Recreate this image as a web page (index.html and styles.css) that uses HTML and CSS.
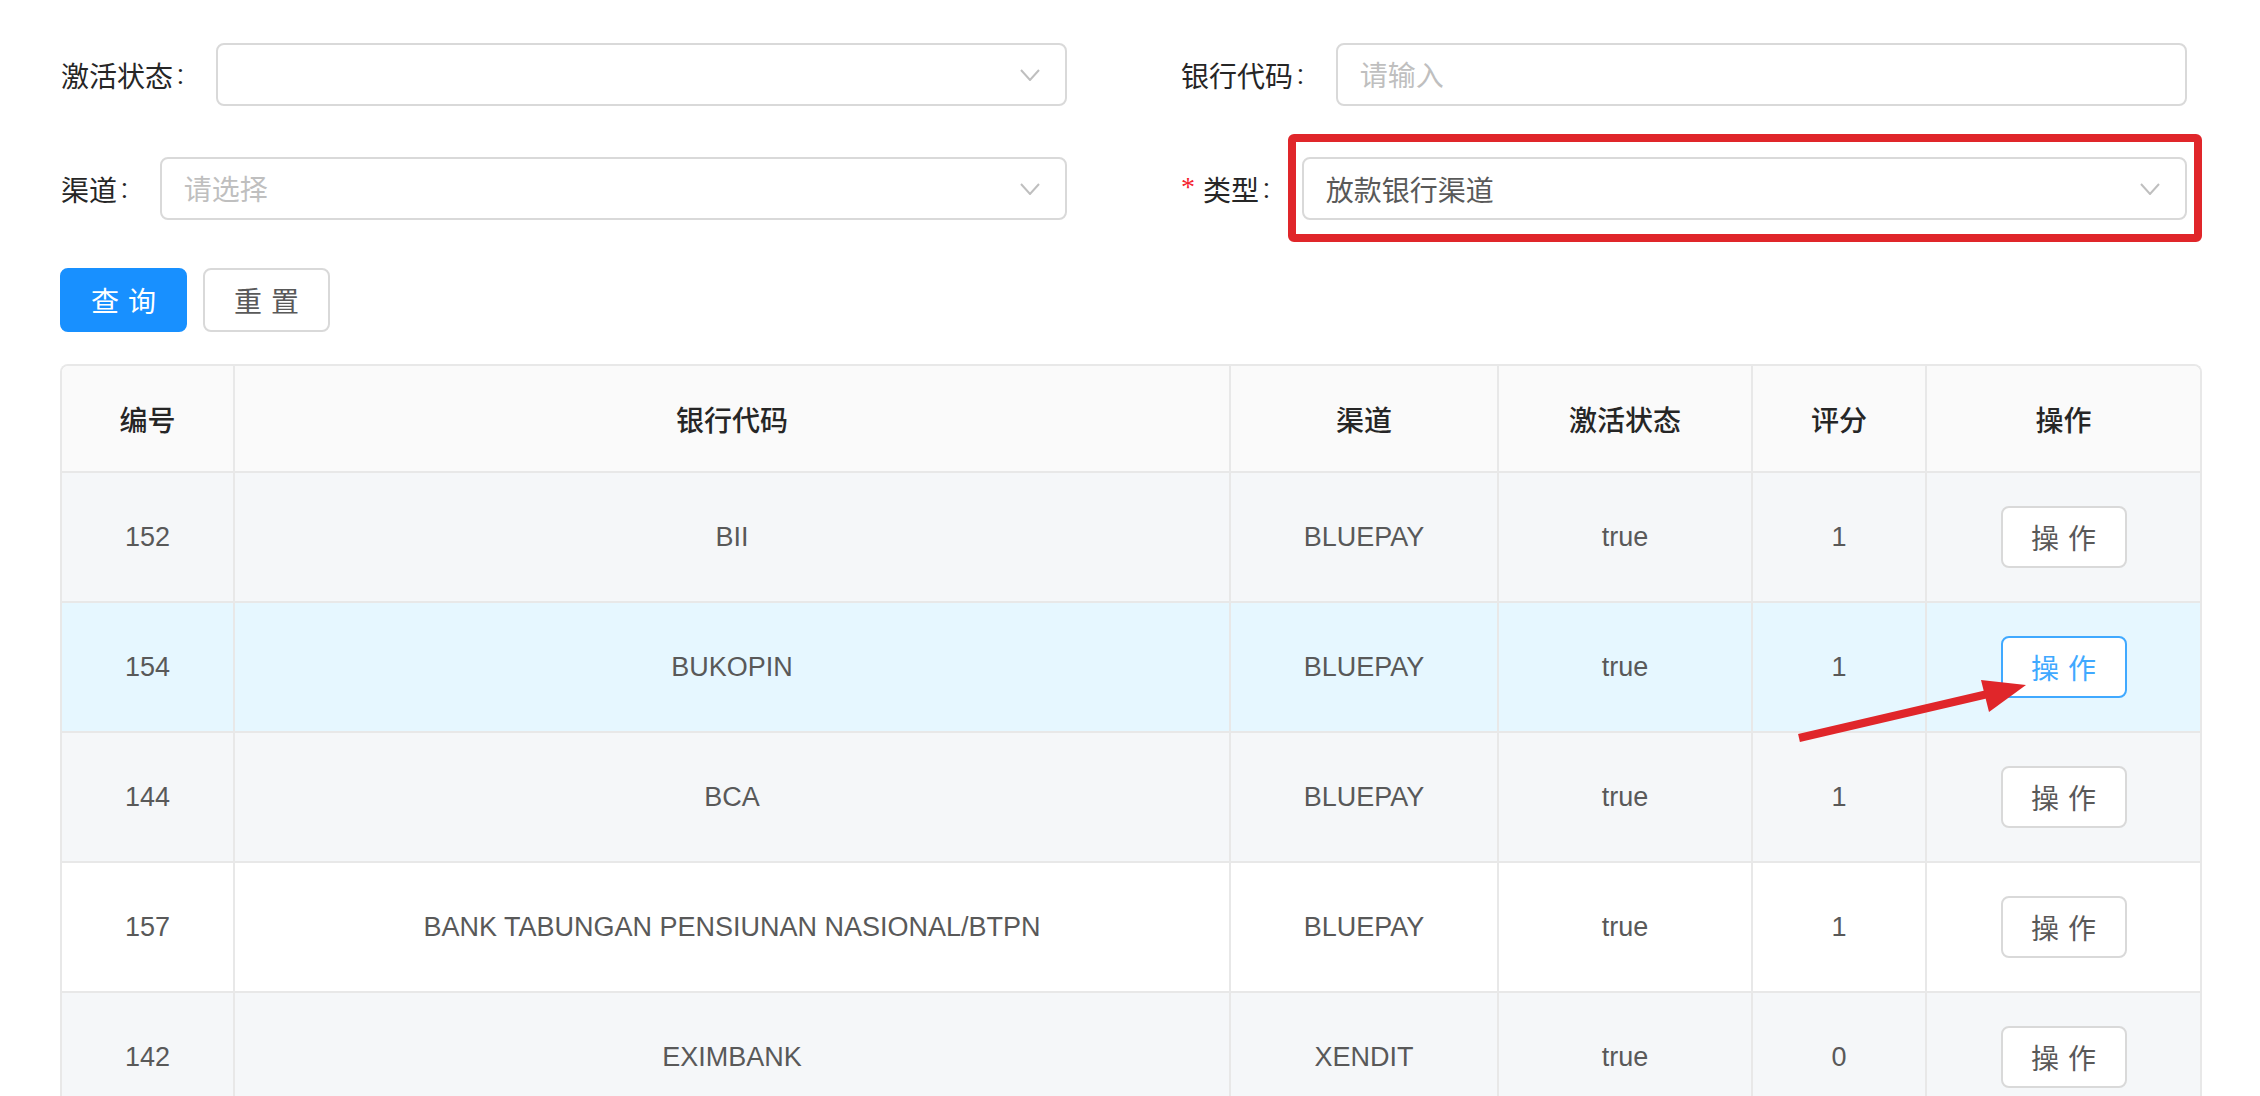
FILE: index.html
```html
<!DOCTYPE html>
<html lang="zh-CN">
<head>
<meta charset="utf-8">
<title>银行渠道</title>
<link rel="stylesheet" href="styles.css">
</head>
<body>
<div class="page">
  <form class="search-form">
    <div class="form-item">
      <label class="label">激活状态<span class="colon">:</span></label>
      <div class="control select">
        <span class="value"></span>
        <svg class="chevron" viewBox="0 0 20 12" width="20" height="12"><polyline points="1,1 10,11 19,1"/></svg>
      </div>
    </div>
    <div class="form-item">
      <label class="label">银行代码<span class="colon">:</span></label>
      <div class="control">
        <span class="placeholder">请输入</span>
      </div>
    </div>
    <div class="form-item">
      <label class="label">渠道<span class="colon">:</span></label>
      <div class="control select">
        <span class="placeholder">请选择</span>
        <svg class="chevron" viewBox="0 0 20 12" width="20" height="12"><polyline points="1,1 10,11 19,1"/></svg>
      </div>
    </div>
    <div class="form-item">
      <label class="label"><span class="req">*</span>类型<span class="colon">:</span></label>
      <div class="control select">
        <span class="value">放款银行渠道</span>
        <svg class="chevron" viewBox="0 0 20 12" width="20" height="12"><polyline points="1,1 10,11 19,1"/></svg>
      </div>
    </div>
  </form>

  <div class="actions">
    <button class="btn btn-primary" type="button"><span>查询</span></button>
    <button class="btn" type="button"><span>重置</span></button>
  </div>

  <div class="table">
    <div class="tr thead">
      <div class="th">编号</div>
      <div class="th">银行代码</div>
      <div class="th">渠道</div>
      <div class="th">激活状态</div>
      <div class="th">评分</div>
      <div class="th">操作</div>
    </div>
    <div class="tr stripe">
      <div class="td">152</div>
      <div class="td">BII</div>
      <div class="td">BLUEPAY</div>
      <div class="td">true</div>
      <div class="td">1</div>
      <div class="td"><button class="btn btn-sm" type="button"><span>操作</span></button></div>
    </div>
    <div class="tr hover">
      <div class="td">154</div>
      <div class="td">BUKOPIN</div>
      <div class="td">BLUEPAY</div>
      <div class="td">true</div>
      <div class="td">1</div>
      <div class="td"><button class="btn btn-sm btn-hover" type="button"><span>操作</span></button></div>
    </div>
    <div class="tr stripe">
      <div class="td">144</div>
      <div class="td">BCA</div>
      <div class="td">BLUEPAY</div>
      <div class="td">true</div>
      <div class="td">1</div>
      <div class="td"><button class="btn btn-sm" type="button"><span>操作</span></button></div>
    </div>
    <div class="tr">
      <div class="td">157</div>
      <div class="td">BANK TABUNGAN PENSIUNAN NASIONAL/BTPN</div>
      <div class="td">BLUEPAY</div>
      <div class="td">true</div>
      <div class="td">1</div>
      <div class="td"><button class="btn btn-sm" type="button"><span>操作</span></button></div>
    </div>
    <div class="tr stripe">
      <div class="td">142</div>
      <div class="td">EXIMBANK</div>
      <div class="td">XENDIT</div>
      <div class="td">true</div>
      <div class="td">0</div>
      <div class="td"><button class="btn btn-sm" type="button"><span>操作</span></button></div>
    </div>
  </div>

  <div class="highlight-box"></div>
  <svg class="annot-arrow" viewBox="0 0 2260 1096" width="2260" height="1096">
    <line x1="1799" y1="738" x2="1992" y2="693"/>
    <polygon points="1981,680 2026,685 1989,712"/>
  </svg>
</div>
</body>
</html>
```

FILE: styles.css
```css
html, body {
  margin: 0;
  padding: 0;
  overflow: hidden;
  background: #ffffff;
}

body {
  font-family: Roboto, "Noto Sans CJK SC", sans-serif;
  font-size: 28px;
  color: #595959;
}

.page {
  position: relative;
  width: 2260px;
  height: 1096px;
  box-sizing: border-box;
  padding: 43px 58px 0 60px;
}

/* ---------- search form ---------- */
.search-form {
  display: grid;
  grid-template-columns: 1007px 1007px;
  column-gap: 113px;
  row-gap: 51px;
  margin: 0;
}

.form-item {
  display: flex;
  align-items: center;
  height: 63px;
}

.label {
  display: flex;
  align-items: center;
  white-space: nowrap;
  color: #262626;
  font-size: 28px;
  padding-left: 1px;
}

.colon {
  margin: 0 32px 0 4px;
}

.req {
  display: inline-block;
  width: 14px;
  margin-right: 8px;
  color: #f5222d;
  font-family: "Liberation Serif", serif;
  font-size: 28px;
  line-height: 1;
  position: relative;
  top: -2px;
}

.control {
  flex: 1;
  height: 63px;
  box-sizing: border-box;
  border: 2px solid #d9d9d9;
  border-radius: 8px;
  background: #fff;
  display: flex;
  align-items: center;
  padding: 0 25px 0 22px;
  font-size: 28px;
}

.control .value {
  flex: 1;
  color: #595959;
}

.control .placeholder {
  flex: 1;
  color: #bfbfbf;
  position: relative;
  top: -1px;
}

.chevron {
  flex: none;
  margin-left: auto;
}

.chevron polyline {
  fill: none;
  stroke: #bfbfbf;
  stroke-width: 2;
}

/* ---------- buttons ---------- */
.actions {
  display: flex;
  gap: 16px;
  margin-top: 48px;
}

.btn {
  height: 64px;
  padding: 0 29px;
  box-sizing: border-box;
  border: 2px solid #d9d9d9;
  border-radius: 8px;
  background: #fff;
  color: #595959;
  font-family: Roboto, "Noto Sans CJK SC", sans-serif;
  font-size: 28px;
  cursor: pointer;
  display: inline-flex;
  align-items: center;
  justify-content: center;
}

.btn span {
  letter-spacing: 0.32em;
  margin-right: -0.32em;
}

.btn-primary {
  background: #1890ff;
  border-color: #1890ff;
  color: #fff;
}

.btn-sm {
  height: 62px;
  width: 126px;
  padding: 0;
}

.btn-hover {
  border-color: #40a9ff;
  color: #40a9ff;
}

/* ---------- table ---------- */
.table {
  margin-top: 32px;
  border: 2px solid #e8e8e8;
  border-bottom: none;
  border-radius: 8px 8px 0 0;
  overflow: hidden;
}

.tr {
  display: grid;
  grid-template-columns: 173px 996px 268px 254px 174px 1fr;
  height: 130px;
}

.thead {
  height: 107px;
  background: #fafafa;
}

.stripe {
  background: #f5f7f9;
}

.hover {
  background: #e6f7ff;
}

.th,
.td {
  display: flex;
  align-items: center;
  justify-content: center;
  box-sizing: border-box;
  border-right: 2px solid #e8e8e8;
  border-bottom: 2px solid #e8e8e8;
  text-align: center;
}

.th:last-child,
.td:last-child {
  border-right: none;
}

.th {
  color: #262626;
  font-weight: 500;
}

.td {
  color: #595959;
  font-family: "Liberation Sans", "Noto Sans CJK SC", sans-serif;
  font-size: 27px;
}

/* ---------- annotations ---------- */
.highlight-box {
  position: absolute;
  left: 1288px;
  top: 134px;
  width: 914px;
  height: 108px;
  box-sizing: border-box;
  border: 8px solid #e0262a;
  border-radius: 6px;
  pointer-events: none;
}

.annot-arrow {
  position: absolute;
  left: 0;
  top: 0;
  pointer-events: none;
}

.annot-arrow line {
  stroke: #e0262a;
  stroke-width: 8;
}

.annot-arrow polygon {
  fill: #e0262a;
}
```
